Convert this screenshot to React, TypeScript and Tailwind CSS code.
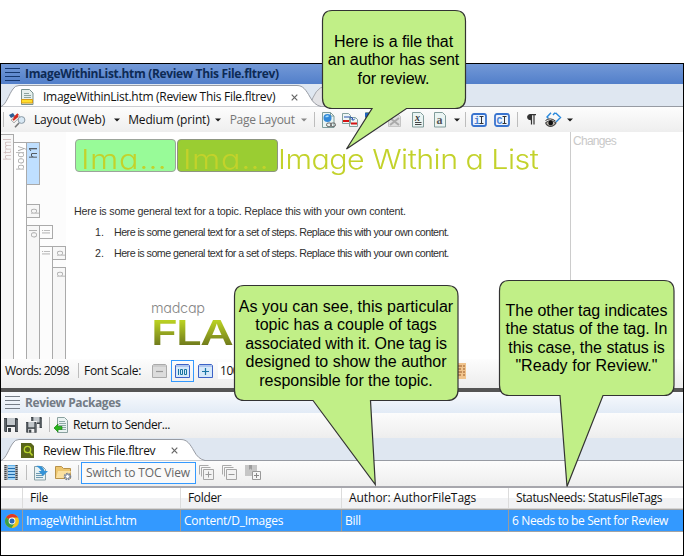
import { useLayoutEffect, useRef, useState } from "react";
import type { ReactNode } from "react";

const UI = "font-['Open_Sans','Noto_Sans',sans-serif] text-[12px] leading-[16px]";

/** One line of text whose tracking is adjusted so that it fills `w` pixels. */
function Fit({ w, className = "", children }: { w: number; className?: string; children: string }) {
  const ref = useRef<HTMLSpanElement>(null);
  const [gap, setGap] = useState(0);
  useLayoutEffect(() => {
    if (ref.current) setGap((w - ref.current.offsetWidth) / children.length);
  }, []);
  return (
    <span ref={ref} className={`inline-block shrink-0 whitespace-pre ${className}`} style={{ letterSpacing: `${gap}px` }}>
      {children}
    </span>
  );
}

function Svg({ w = 16, h = 16, className = "", children }: { w?: number; h?: number; className?: string; children: ReactNode }) {
  return (
    <svg width={w} height={h} viewBox={`0 0 ${w} ${h}`} fill="none" className={`block shrink-0 ${className}`}>
      {children}
    </svg>
  );
}

const Sep = ({ className = "" }: { className?: string }) => <div className={`h-[15px] w-px shrink-0 bg-[#bdbdbd] ${className}`} />;

const Arrow = ({ className = "", color = "#1a1a1a" }: { className?: string; color?: string }) => (
  <Svg w={6} h={4} className={className}>
    <path d="M0 .5h6L3 3.500z" fill={color} />
  </Svg>
);

const Grip = ({ color, className = "" }: { color: string; className?: string }) => (
  <Svg w={15} h={13} className={className}>
    <path d="M0 .5h15M0 4.500h15M0 8.500h15M0 12.500h15" stroke={color} />
  </Svg>
);

const Page = () => <path d="M1.500 .5h8l3.500 3.500v11.500h-11.500zM9.500 .5v3.500h3.500" fill="#eaf4f3" stroke="#7e9c9a" />;

const Floppy = ({ x = 0, y = 0, s = 1 }: { x?: number; y?: number; s?: number }) => (
  <g transform={`translate(${x} ${y}) scale(${s})`}>
    <path d="M0 0h13l1 1v13h-13l-1-1z" fill="#3f454a" />
    <path d="M3 0h8v7h-8z" fill="#c3c8cc" />
    <path d="M3 9h8v5h-8z" fill="#f3f3f3" />
    <path d="M4 10h3v4h-3z" fill="#3f454a" />
    <path d="M1 1v12M13 2v11" stroke="#80868a" />
  </g>
);

function Tab({ width }: { width: number }) {
  const r = width;
  return (
    <Svg w={r} h={22}>
      <path d={`M0 21.500C5 20 8 9 12 4Q14 .5 18 .5H${r - 24}C${r - 18} .5 ${r - 15} 5 ${r - 11} 12Q${r - 7} 20 ${r} 21.500`} fill="#fff" stroke="#979ba3" />
    </Svg>
  );
}

const Close = ({ className = "" }: { className?: string }) => (
  <Svg w={7} h={7} className={className}>
    <path d="M.7.7l5.600 5.600M6.300.7L.7 6.300" stroke="#666" strokeWidth="1.200" />
  </Svg>
);

const Cell = ({ className, children }: { className: string; children: string }) => (
  <div className={`flex w-[13px] shrink-0 justify-center border-t border-r border-[#aaa] ${className}`}>
    <span className="rotate-180 self-start text-[10.500px] leading-[11px] [writing-mode:vertical-rl]">{children}</span>
  </div>
);

function StructureBars() {
  return (
    <div className="flex h-full w-[65px] shrink-0 bg-[#fcfcfc] font-['Open_Sans','Noto_Sans',sans-serif] text-[#aaa]">
      <Cell className="mt-[2px] bg-[#f7f7f7] pt-[3px] text-[#cdb9b9]">html</Cell>
      <Cell className="mt-[10px] bg-white pt-[3px]">body</Cell>
      <div className="flex w-[13px] flex-col pt-[10px]">
        <Cell className="h-[43px] border-b bg-[#bfdfff] pt-[3px] text-[#333]">h1</Cell>
        <Cell className="mt-[19px] h-[14px] border-b bg-[#f7f7f7] pt-[3px]">p</Cell>
        <Cell className="mt-[7px] flex-1 bg-[#f7f7f7] pt-[3px]">ol</Cell>
      </div>
      <div className="flex w-[13px] flex-col pt-[93px]">
        <Cell className="h-[14px] border-b bg-[#fcfcfc] pt-[3px]">li</Cell>
        <Cell className="mt-[7px] flex-1 bg-[#fcfcfc] pt-[3px]">li</Cell>
      </div>
      <div className="flex w-[13px] flex-col pt-[114px]">
        <Cell className="h-[14px] border-b bg-[#f7f7f7] pt-[3px]">p</Cell>
        <Cell className="mt-[7px] flex-1 bg-[#f7f7f7] pt-[3px]">p</Cell>
      </div>
    </div>
  );
}

function EditorToolbar() {
  return (
    <div className={`flex h-[25px] shrink-0 items-center bg-linear-to-b from-[#fdfdfd] to-[#eeeeee] ${UI} text-[#111]`}>
      <Sep className="ml-[2px]" />
      <Svg w={17} className="ml-[5px]">
        <path d="M0 3l4-2 2 3-4 2z" fill="#2d5d94" />
        <path d="M2 8l7-6 2 3-6 6z" fill="#ece9e6" stroke="#8a8a8a" strokeWidth=".6" />
        <path d="M5 6l4-4M4 8l5-4" stroke="#d3291d" strokeWidth="1.800" />
        <circle cx="12.500" cy="8" r="3.400" fill="#d8e8f4" stroke="#8b9aa5" />
        <path d="M10 11l-4 4.300" stroke="#777" strokeWidth="1.600" />
      </Svg>
      <Fit w={71} className="ml-[8px]">Layout (Web)</Fit>
      <Arrow className="ml-[9px]" />
      <Fit w={81} className="ml-[8px]">Medium (print)</Fit>
      <Arrow className="ml-[5px]" />
      <Fit w={65} className="ml-[9px] text-[#777]">Page Layout</Fit>
      <Arrow className="ml-[6px]" color="#888" />
      <Sep className="ml-[7px]" />
      <Svg w={16} className="ml-[6px]">
        <Page />
        <circle cx="6.500" cy="6" r="4" fill="#3289d8" />
        <path d="M4 5q2-3 4-1-1 2-4 1" fill="#a7dcfa" />
        <rect x="5.500" y="11" width="5" height="3.500" rx="1.700" stroke="#666" />
        <rect x="9.500" y="11" width="5" height="3.500" rx="1.700" stroke="#666" />
      </Svg>
      <Svg w={18} className="ml-[4px]">
        <path d="M1.500 1.500h6l2 2v8h-8zM8.500 5.500h6l2 2v7h-8z" fill="#eef6f5" stroke="#83a09e" />
        <path d="M2 9h6M10 11.500h6" stroke="#d41313" strokeWidth="2" />
        <path d="M3 5h6q3 0 3 3M10 6.500l2 2 2-2" stroke="#2550ae" />
      </Svg>
      <Svg w={16} className="ml-[5px]">
        <Page />
        <path d="M1 1h8v4h-8z" fill="#1e62bf" />
      </Svg>
      <Svg w={14} className="ml-[8px]">
        <path d="M.5 1.500h9l3 3v10h-12z" fill="#dedede" stroke="#c5c5c5" />
        <path d="M2 6l9 7M11 6l-9 7" stroke="#aaa" strokeWidth="2" />
      </Svg>
      <Svg w={14} className="ml-[10px]">
        <path d="M.5 .5h8l3 3v11.500h-11z" fill="#eaf4f3" stroke="#819c9a" />
        <text x="3" y="9" fontSize="10" fontWeight="bold" fontStyle="italic" fill="#333" fontFamily="Liberation Serif">x</text>
        <path d="M3 10.500h6.500M3 12.500h6.500" stroke="#444" />
      </Svg>
      <Svg w={13} className="ml-[8px]">
        <path d="M.5 .5h8l3 3v11.500h-11z" fill="#eaf4f3" stroke="#819c9a" />
        <text x="2.500" y="12" fontSize="12" fontWeight="bold" fill="#555" fontFamily="Liberation Serif">a</text>
      </Svg>
      <Arrow className="ml-[7px]" />
      <Sep className="ml-[5px]" />
      <InsertIcon letter="i" className="ml-[5px]" />
      <InsertIcon letter="C" className="ml-[7px]" />
      <Sep className="ml-[7px]" />
      <Svg w={9} h={11} className="ml-[9px]">
        <path d="M4.500 .5H3.200a2.600 2.600 0 0 0 0 5.200H4.500z" fill="#333" stroke="#333" />
        <path d="M3 .6h6M4.500 .5v10M7 .5v10" stroke="#333" strokeWidth="1.200" />
      </Svg>
      <Svg w={17} className="ml-[9px]">
        <path d="M6 .8L2 5l1.500 1.500M10.500 .8l5 4.700-4.500 4.500M10 .8L8 3" stroke="#2988dc" strokeWidth="1.400" />
        <path d="M.5 11q5-5 10.500 0-2.500 3.500-5.500 3.500T.5 11" fill="#c4beb5" stroke="#444" strokeWidth="1.100" />
        <circle cx="5.700" cy="11" r="2.400" fill="#111" />
        <path d="M.5 8.500q4.500-3.500 10 .5" stroke="#333" />
      </Svg>
      <Arrow className="ml-[5px]" />
    </div>
  );
}

const InsertIcon = ({ letter, className }: { letter: string; className: string }) => (
  <Svg w={16} h={14} className={className}>
    <rect x="1" y="1" width="14" height="12" rx="2" fill="#edf4fd" stroke="#3974cf" strokeWidth="1.800" />
    <text x={letter === "i" ? 3 : 2.600} y="10.500" fontSize="10" fontWeight="bold" fill="#4b82d2" fontFamily="Liberation Mono">{letter}</text>
    <path d="M8.500 3.500h4M8.500 10.500h4M10.500 3.500v7" stroke="#333" />
  </Svg>
);

function Editor() {
  const body = "font-['Liberation_Sans',Arial,sans-serif] text-[10.700px] leading-[13px] text-[#303030]";
  const head = "font-['Inter',sans-serif] text-[27.500px] leading-[32px] font-light text-[#c3d22b] [font-feature-settings:'cv11']";
  return (
    <div className="flex h-[227px] shrink-0 bg-white">
      <StructureBars />
      <div className="flex w-[504px] flex-col pl-[8px] pt-[7px]">
        <div className={`flex h-[33px] pl-px ${head}`}>
          <div className="h-[33px] w-[101px] shrink-0 rounded-[4px] border border-[#9ca49b] bg-[#98fb98] pl-[5px] pt-[3px]">
            <Fit w={73} className="origin-left scale-x-[1.180]">Ima…</Fit>
          </div>
          <div className="ml-px h-[33px] w-[101px] shrink-0 rounded-[4px] border border-[#8d9580] bg-[#9acd32] pl-[5px] pt-[3px]">
            <Fit w={73} className="origin-left scale-x-[1.180]">Ima…</Fit>
          </div>
          <Fit w={235} className="origin-left scale-x-[1.106] pt-[4px]">Image Within a List</Fit>
        </div>
        <div className={`mt-[33px] ${body}`}>
          <Fit w={332}>Here is some general text for a topic. Replace this with your own content.</Fit>
        </div>
        <div className={`mt-[8px] flex pl-[21px] ${body}`}>
          <span className="w-[19px]">1.</span>
          <Fit w={335}>Here is some general text for a set of steps. Replace this with your own content.</Fit>
        </div>
        <div className={`mt-[8px] flex pl-[21px] ${body}`}>
          <span className="w-[19px]">2.</span>
          <Fit w={335}>Here is some general text for a set of steps. Replace this with your own content.</Fit>
        </div>
        <div className="mt-[41px] flex flex-col pl-[77px]">
          <Fit w={54} className="h-[14px] self-start font-['Inter',sans-serif] text-[14.500px] leading-[14px] font-light text-[#888] [font-feature-settings:'cv11']">madcap</Fit>
          <Fit w={100} className="mt-px origin-left scale-x-[1.350] self-start bg-linear-to-b from-[#b9d022] from-15% to-[#717c1c] to-85% bg-clip-text font-['Inter',sans-serif] text-[34px] leading-[34px] font-semibold text-transparent">FLARE</Fit>
        </div>
      </div>
      <div className="flex-1 border-l border-[#ccc] pt-[3px] pl-[2px] font-['Liberation_Sans',Arial,sans-serif] text-[12px] leading-[13px] text-[#c9c9c9]">
        <Fit w={43}>Changes</Fit>
      </div>
    </div>
  );
}

const ScaleIcon = ({ kind, className = "" }: { kind: "minus" | "full" | "plus"; className?: string }) => {
  const c = kind === "minus" ? "#aaaaaa" : "#3c62c7";
  return (
    <Svg w={15} h={14} className={className}>
      <path d="M1.500 .5h12l1 1v12h-14v-12z" fill={kind === "minus" ? "#dcdcdc" : "#d6e9fa"} stroke={c} />
      <path d="M1 2h13" stroke={kind === "minus" ? "#bbb" : "#8aa4e0"} />
      {kind === "full" ? (
        <path d="M3.500 5v6M5.500 5.500h2v5h-2zM9.500 5.500h2v5h-2z" stroke="#17749e" />
      ) : (
        <path d={kind === "plus" ? "M4 7.500h7M7.500 4v7" : "M4 7.500h7"} stroke={kind === "plus" ? "#1975a5" : "#999"} strokeWidth="1.200" />
      )}
    </Svg>
  );
};

function StatusBar() {
  return (
    <div className={`flex h-[29px] shrink-0 items-center bg-linear-to-b from-[#fdfdfd] to-[#ececec] pb-[6px] ${UI} text-[#111]`}>
      <Fit w={64} className="ml-[4px]">Words: 2098</Fit>
      <Sep className="ml-[9px]" />
      <Fit w={57} className="ml-[5px]">Font Scale:</Fit>
      <ScaleIcon kind="minus" className="ml-[11px]" />
      <div className="ml-[4px] flex h-[22px] w-[23px] shrink-0 items-center justify-center border border-[#3399ff]">
        <ScaleIcon kind="full" />
      </div>
      <ScaleIcon kind="plus" className="ml-[4px]" />
      <div className="ml-[5px] flex h-[17px] w-[40px] items-center bg-white pl-[2px]">
        <Fit w={29}>100%</Fit>
      </div>
      <Svg w={18} className="ml-[191px]">
        <path d="M0 0h17v16h-17z" fill="#f0c48e" />
        <path d="M2 2v12M15 2v12" stroke="#9a5b28" strokeDasharray="2 1" />
        <path d="M9 3h4M9 6h3M9 9h4M9 12h3" stroke="#9a5b28" />
      </Svg>
    </div>
  );
}

const Stack = ({ plus, className }: { plus: boolean; className: string }) => (
  <Svg w={15} h={15} className={className}>
    <path d="M.5 9.500v-9h9M2.500 11.500v-9h9" stroke="#aaa" />
    <path d="M4.500 4.500h10v10h-10z" fill="#f3f3f3" stroke="#a5a5a5" />
    <path d={plus ? "M6.500 9.500h6M9.500 6.500v6" : "M6.500 9.500h6"} stroke="#999" />
  </Svg>
);

function Callout({ children, className, path }: { children: string[]; className: string; path: string }) {
  return (
    <div className={`absolute z-10 font-['Liberation_Sans',Arial,sans-serif] text-[16px] leading-[18.400px] text-black ${className}`}>
      <svg className="absolute inset-0 overflow-visible" width="1" height="1">
        <path d={path} fill="#c1ef87" stroke="#333" strokeWidth="1.200" />
      </svg>
      {children.map((line) => {
        const [text, w] = line.split("|");
        return (
          <div key={line} className="relative flex justify-center">
            <Fit w={Number(w)}>{text}</Fit>
          </div>
        );
      })}
    </div>
  );
}

const HeadCell = ({ w, className, children }: { w: number; className: string; children: string }) => (
  <div className={`flex items-center border-l border-[#dcdcdc] pl-[7px] ${className}`}>
    <Fit w={w}>{children}</Fit>
  </div>
);
const RowCell = ({ w, className, children }: { w: number; className: string; children: string }) => (
  <div className={`flex items-center border-l border-[#9b9b9b] pl-[3px] ${className}`}>
    <Fit w={w}>{children}</Fit>
  </div>
);

function Packages() {
  return (
    <>
      <div className="flex h-[21px] shrink-0 items-center bg-linear-to-b from-[#f8fafd] to-[#e2ebf6]">
        <Grip color="#757d87" className="ml-[4px]" />
        <Fit w={95} className={`ml-[5px] font-bold text-[#737b85] ${UI}`}>Review Packages</Fit>
      </div>
      <div className={`flex h-[25px] shrink-0 items-center bg-linear-to-b from-[#fcfcfc] to-[#eeeeee] pb-[2px] ${UI} text-[#111]`}>
        <Svg w={14} h={14} className="ml-[3px]">
          <Floppy />
        </Svg>
        <Svg w={16} className="ml-[8px]">
          <Floppy x={5} s={0.78} />
          <path d="M0 4h11v12h-11z" fill="#f4f4f4" />
          <Floppy y={5} s={0.76} />
        </Svg>
        <Sep className="ml-[7px]" />
        <Svg w={15} className="ml-[4px]">
          <path d="M3.500 .5h7l3 3v12h-10z" fill="#eaf3f2" stroke="#8aa19f" />
          <path d="M5 4.500h6M5 6.500h7M5 8.500h7M8 10.500h4M8 12.500h4" stroke="#8eaaa8" />
          <path d="M0 11l4-4v2.500h4v3H4V15z" fill="#29b51c" stroke="#17820f" strokeWidth=".7" />
        </Svg>
        <Fit w={97} className="ml-[4px]">Return to Sender...</Fit>
      </div>
      <div className="grid h-[23px] shrink-0 border-b border-[#979ba3] bg-[#dfe7f1]">
        <div className="col-start-1 row-start-1 pt-px">
          <Tab width={204} />
        </div>
        <div className={`relative col-start-1 row-start-1 flex items-center pt-[2px] ${UI}`}>
          <Svg w={13} h={15} className="ml-[20px]">
            <path d="M0 0h10l3 3v12h-13z" fill="#59651a" />
            <circle cx="6.500" cy="6.500" r="3.200" stroke="#b7d42b" strokeWidth="1.300" />
            <path d="M8.500 9l3 3.500" stroke="#b7d42b" strokeWidth="1.600" />
          </Svg>
          <Fit w={112} className="ml-[9px] text-[#111]">Review This File.fltrev</Fit>
          <Close className="ml-[16px]" />
        </div>
      </div>
      <div className={`flex h-[25px] shrink-0 items-center bg-linear-to-b from-[#fcfcfc] to-[#eeeeee] pb-[2px] ${UI}`}>
        <Svg w={14} h={15} className="ml-[3px]">
          <path d="M0 0h14v15h-14z" fill="#a9afb5" />
          <path d="M4 0h7v15h-7z" fill="#5fb1ea" />
          <path d="M1.500 0v15M12.500 0v15" stroke="#444" strokeWidth="2" strokeDasharray="1 1" />
          <path d="M4 2h7M4 5h7M4 8h7M4 11h7M4 14h7" stroke="#e9f6ff" />
          <path d="M4 3.500h7M4 6.500h7M4 9.500h7M4 12.500h7" stroke="#206bac" />
        </Svg>
        <Sep className="ml-[8px]" />
        <Svg w={15} className="ml-[7px]">
          <path d="M.5 1.500h8l3 3v10.500h-11z" fill="#e7f2f4" stroke="#8aa0a6" />
          <path d="M2 8.500h6M2 10.500h7M2 12.500h7" stroke="#6d99b0" />
          <path d="M2 1q7-1 8.500 5h3.500l-5 5-4.500-5h3Q6 3 2 1" fill="#3593d7" />
        </Svg>
        <Svg w={17} className="ml-[6px]">
          <path d="M.5 13.500v-12h6l2 2h7v10z" fill="#edc66f" stroke="#b8924a" />
          <path d="M1 13l2-7h13l-2 7z" fill="#fae0a0" />
          <circle cx="12.500" cy="11.500" r="2.800" stroke="#798292" strokeWidth="2" fill="#fff" strokeDasharray="1.600 .7" />
          <circle cx="12.500" cy="11.500" r="2" stroke="#8a92a0" fill="#fff" />
        </Svg>
        <Sep className="ml-[6px]" />
        <div className="ml-[2px] flex h-[22px] w-[115px] shrink-0 items-center border border-[#3399ff] bg-[#fafafa] pl-[4px] text-[#666]">
          <Fit w={104}>Switch to TOC View</Fit>
        </div>
        <Stack plus className="ml-[3px]" />
        <Stack plus={false} className="ml-[8px]" />
        <Svg w={17} className="ml-[8px]">
          <path d="M0 0h12v11h-12z" fill="#c6c6c6" />
          <path d="M4 0v5l1.500-1.500 1.500 1.500v-5z" fill="#9c9c9c" />
          <path d="M7.500 6.500h8v8h-8z" fill="#f5f5f5" stroke="#999" />
          <path d="M9 10.500h5M11.500 8v5" stroke="#888" />
        </Svg>
      </div>
      <div className="h-[2px] shrink-0 bg-[#a7a7ad]" />
      <div className={`flex h-[21px] shrink-0 border-b border-[#d5d5d5] bg-linear-to-b from-white from-50% to-[#f1f2f4] to-50% ${UI} text-[#111]`}>
        <div className="w-[21px]" />
        <HeadCell w={18} className="w-[158px]">File</HeadCell>
        <HeadCell w={33} className="w-[161px]">Folder</HeadCell>
        <HeadCell w={127} className="w-[167px]">Author: AuthorFileTags</HeadCell>
        <HeadCell w={146} className="flex-1">StatusNeeds: StatusFileTags</HeadCell>
      </div>
      <div className={`flex h-[23px] shrink-0 border-y border-[#a3a3a3] bg-[#3399ff] ${UI} text-white`}>
        <div className="flex w-[21px] items-center pl-[4px]">
          <Svg w={14} h={14}>
            <circle cx="7" cy="7" r="7" fill="#f2c51d" />
            <path d="M7 7L1 3.400A7 7 0 0 1 13.100 3.600H7z" fill="#df3627" />
            <path d="M7 7L1 3.400A7 7 0 0 0 6.500 14L10 8.500z" fill="#3d9f48" />
            <circle cx="7" cy="7" r="3.400" fill="#fff" />
            <circle cx="7" cy="7" r="2.500" fill="#2a67b9" />
          </Svg>
        </div>
        <RowCell w={111} className="w-[158px]">ImageWithinList.htm</RowCell>
        <RowCell w={99} className="w-[161px]">Content/D_Images</RowCell>
        <RowCell w={16} className="w-[167px]">Bill</RowCell>
        <RowCell w={156} className="flex-1">6 Needs to be Sent for Review</RowCell>
      </div>
    </>
  );
}

export default function App() {
  return (
    <div className="relative h-[556px] w-[684px] overflow-hidden bg-white pt-[63px]">
      <div className="flex h-[493px] flex-col border border-black bg-white">
        <div className="flex h-[20px] shrink-0 items-center bg-linear-to-b from-[#7399d7] to-[#527fca]">
          <Grip color="#16386f" className="ml-[4px]" />
          <Fit w={254} className={`ml-[5px] font-bold text-[#0d2a55] ${UI}`}>ImageWithinList.htm (Review This File.fltrev)</Fit>
        </div>
        <div className="grid h-[23px] shrink-0 border-b border-[#979ba3] bg-[#dfe7f1]">
          <div className="col-start-1 row-start-1 flex pt-px">
            <div className="grid">
              <Svg w={344} h={22} className="col-start-1 row-start-1">
                <path d="M309 21.500Q314 2 324 1.500H344V21.500z" fill="#e3e3e6" stroke="#a5a8af" />
              </Svg>
              <div className="col-start-1 row-start-1">
                <Tab width={320} />
              </div>
            </div>
          </div>
          <div className={`relative col-start-1 row-start-1 flex items-center pt-[3px] ${UI}`}>
            <Svg w={13} className="ml-[20px]">
              <path d="M.5 .5h8l3.500 3.500v11.500h-11.500z" fill="#e6f0ed" stroke="#78918e" />
              <path d="M3 4.500h5M3 6.500h7M3 8.500h7" stroke="#8da49f" />
              <path d="M.5 10.500h11v3.500h-11z" fill="#ffdf2c" stroke="#d69a18" />
            </Svg>
            <Fit w={232} className="ml-[9px] text-[#111]">ImageWithinList.htm (Review This File.fltrev)</Fit>
            <Close className="ml-[16px]" />
          </div>
        </div>
        <EditorToolbar />
        <Editor />
        <StatusBar />
        <div className="h-[4px] shrink-0 bg-[#555]" />
        <Packages />
      </div>

      <Callout
        className="top-[10px] left-[322px] h-[98px] w-[143px] pt-[23px]"
        path="M10 .5H133Q143.500 .5 143.500 11V88Q143.500 98.500 133 98.500H84.500L24.500 139L50 98.500H10Q.5 98.500 .5 88V11Q.5 .5 10 .5z"
      >
        {["Here is a file that|119", "an author has sent|132", "for review.|72"]}
      </Callout>
      <Callout
        className="top-[285px] left-[234px] h-[116px] w-[224px] pt-[13px]"
        path="M10 .5H213Q224 .5 224 11V105Q224 115.500 213 115.500H136.500L141.300 199.500L79 115.500H10Q.5 115.500 .5 105V11Q.5 .5 10 .5z"
      >
        {["As you can see, this particular|214", "topic has a couple of tags|181", "associated with it. One tag is|202", "designed to show the author|201", "responsible for the topic.|173"]}
      </Callout>
      <Callout
        className="top-[280px] left-[499px] h-[116px] w-[175px] pt-[22px]"
        path="M10 .5H165Q175 .5 175 11V105Q175 115.500 165 115.500H104L68 206.500L61 115.500H10Q.5 115.500 .5 105V11Q.5 .5 10 .5z"
      >
        {["The other tag indicates|162", "the status of the tag. In|162", "this case, the status is|156", '"Ready for Review."|142']}
      </Callout>
    </div>
  );
}
